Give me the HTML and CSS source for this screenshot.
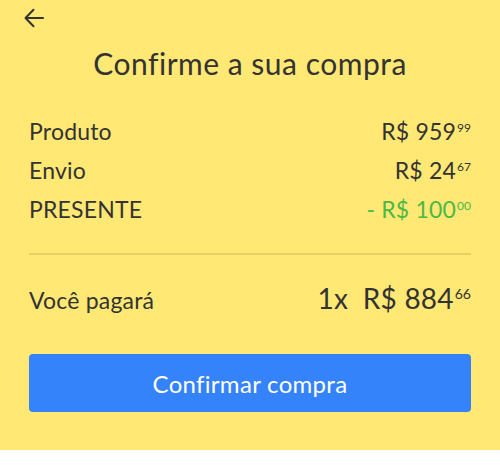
FILE: index.html
```html
<!DOCTYPE html>
<html>
<head>
    <title>Confirme a sua compra</title>
    <link rel="stylesheet" href="styles.css">
</head>
<body>
<div class="screen">
    <div class="topbar">
        <a href="#" class="back">
            <svg width="20" height="20" viewBox="0 0 20 20">
                <path d="M19 10H2M9.5 1.8L1.5 10L9.5 18.2" fill="none" stroke="#333" stroke-width="2" stroke-linecap="round" stroke-linejoin="round"/>
            </svg>
        </a>
    </div>
    <h1 class="title">Confirme a sua compra</h1>

    <div class="summary">
        <div class="row">
            <span>Produto</span>
            <span class="price">R$ 959<span class="cents">99</span></span>
        </div>
        <div class="row">
            <span>Envio</span>
            <span class="price">R$ 24<span class="cents">67</span></span>
        </div>
        <div class="row">
            <span>PRESENTE</span>
            <span class="price discount">- R$ 100<span class="cents">00</span></span>
        </div>
    </div>

    <hr class="divider">

    <div class="row total">
        <span>Você pagará</span>
        <span class="price">1x&nbsp; R$ 884<span class="cents">66</span></span>
    </div>

    <button class="confirm">Confirmar compra</button>
</div>
</body>
</html>
```

FILE: styles.css
```css
body {
	margin: 0;
	background-color: #FFFFFF;
	font-family: Lato, "Open Sans", sans-serif;
	color: #333333;
}

.screen {
	background-color: #FFE873;
	height: 450px;
	padding: 0 29px;
	box-sizing: border-box;
}

.topbar {
	height: 36px;
	display: flex;
	align-items: center;
}

.back {
	display: flex;
	margin-left: -5px;
}

.title {
	font-size: 30px;
	font-weight: 400;
	line-height: 36px;
	letter-spacing: 0.5px;
	text-align: center;
	margin: 9px 0 31px 0;
}

.row {
	display: flex;
	justify-content: space-between;
	align-items: baseline;
	font-size: 23px;
	line-height: 39px;
	letter-spacing: 0.2px;
}

.cents {
	font-size: 12px;
	line-height: 1;
	vertical-align: 8px;
	margin-left: 1px;
	letter-spacing: 0;
}

.discount {
	color: #4CB848;
}

.divider {
	border: none;
	height: 2px;
	background-color: #E8D163;
	margin: 24px 0 0 0;
}

.total {
	margin-top: 23px;
	line-height: 40px;
}

.total .price {
	font-size: 28px;
}

.total .cents {
	font-size: 14px;
	vertical-align: 10px;
}

.confirm {
	display: block;
	width: 100%;
	height: 58px;
	margin-top: 34px;
	background-color: #3483FA;
	color: #FFFFFF;
	border: none;
	border-radius: 4px;
	font-family: Lato, "Open Sans", sans-serif;
	font-size: 24px;
	letter-spacing: 0.3px;
	cursor: pointer;
}
```
